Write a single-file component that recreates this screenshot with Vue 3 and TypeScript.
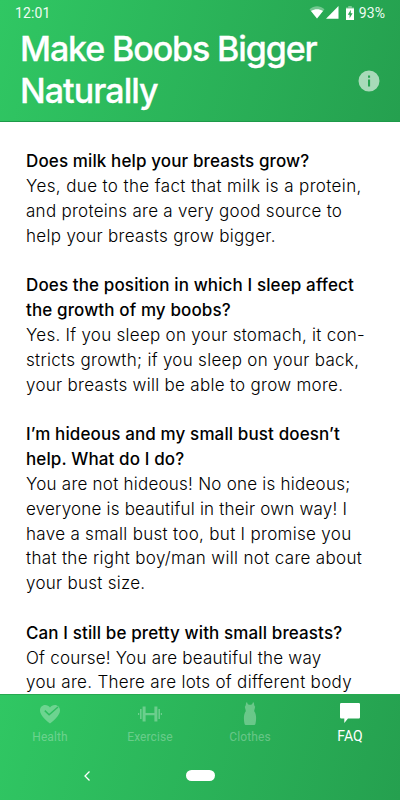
<script setup lang="ts">
interface AnswerLine {
  text: string
  /** letter spacing in px */
  tracking: number
}

interface Faq {
  question: string[]
  answer: AnswerLine[]
}

const title: string[] = ['Make Boobs Bigger', 'Naturally']

const faqs: Faq[] = [
  {
    question: ['Does milk help your breasts grow?'],
    answer: [
      { text: 'Yes, due to the fact that milk is a protein,', tracking: 0.38 },
      { text: 'and proteins are a very good source to', tracking: 0.28 },
      { text: 'help your breasts grow bigger.', tracking: 0.31 },
    ],
  },
  {
    question: ['Does the position in which I sleep affect', 'the growth of my boobs?'],
    answer: [
      { text: 'Yes. If you sleep on your stomach, it con-', tracking: 0.265 },
      { text: 'stricts growth; if you sleep on your back,', tracking: 0.3 },
      { text: 'your breasts will be able to grow more.', tracking: 0.29 },
    ],
  },
  {
    question: ['I’m hideous and my small bust doesn’t', 'help. What do I do?'],
    answer: [
      { text: 'You are not hideous! No one is hideous;', tracking: 0.24 },
      { text: 'everyone is beautiful in their own way! I', tracking: 0.2 },
      { text: 'have a small bust too, but I promise you', tracking: 0.31 },
      { text: 'that the right boy/man will not care about', tracking: 0.33 },
      { text: 'your bust size.', tracking: 0.27 },
    ],
  },
  {
    question: ['Can I still be pretty with small breasts?'],
    answer: [
      { text: 'Of course! You are beautiful the way', tracking: 0.22 },
      { text: 'you are. There are lots of different body', tracking: 0.31 },
    ],
  },
]
</script>

<template>
  <div class="screen">
    <header class="header">
      <div class="status">
        <span class="clock">12:01</span>
        <div class="indicators">
          <svg class="wifi" width="16" height="13" viewBox="0 0 16 13">
            <path d="M.5 3.200C5-.7 11-.7 15.500 3.200L8 12.500z" fill="#fff" fill-opacity=".35" />
            <path d="M2 5C6 2.600 10 2.600 14 5L8 12.500z" fill="#fff" />
          </svg>
          <svg class="signal" width="13" height="13" viewBox="0 0 13 13">
            <path d="M12.500 0v12.800H0z" fill="#fff" />
          </svg>
          <svg class="battery" width="8" height="14" viewBox="0 0 8 14">
            <path d="M2.200 0h3.600v1.500H8v2H0v-2h2.200z" fill="#fff" fill-opacity=".4" />
            <path d="M0 2.500h8V14H0zM4.800 3.800L1.800 8.700h1.800v3.600l3-5H4.800z" fill="#fff" fill-rule="evenodd" />
          </svg>
          <span class="percent">93%</span>
        </div>
      </div>
      <div class="title-row">
        <h1 class="title">
          <span v-for="line in title" :key="line" class="line">{{ line }}</span>
        </h1>
        <svg class="info" width="22" height="22" viewBox="0 0 22 22">
          <path
            fill-rule="evenodd"
            d="M11 .5a10.500 10.500 0 1 0 0 21a10.500 10.500 0 1 0 0-21zM10 5.600h2.100v2.100H10zM10 9.400h2.100v7H10z"
            fill="#fff"
            fill-opacity=".6"
          />
        </svg>
      </div>
    </header>

    <main class="content">
      <section v-for="faq in faqs" :key="faq.question[0]" class="faq">
        <h2 class="question">
          <span v-for="line in faq.question" :key="line" class="line">{{ line }}</span>
        </h2>
        <p class="answer">
          <span
            v-for="line in faq.answer"
            :key="line.text"
            class="line"
            :style="{ letterSpacing: line.tracking + 'px' }"
          >{{ line.text }}</span>
        </p>
      </section>
    </main>

    <footer class="footer">
      <nav class="tabs">
        <div class="tab">
          <svg class="icon" width="24" height="24" viewBox="0 0 24 24">
            <path
              d="M12 21.500C9 19.300 2 13.500 2 8.500C2 5.300 4.300 3 7.100 3C9.300 3 11 4 12 5.500C13 4 14.700 3 16.900 3C19.700 3 22 5.300 22 8.500C22 13.500 15 19.300 12 21.500z"
              fill="currentColor"
            />
            <path class="tick" d="M6.800 8.600l4.300 4.100l8.900-7.700" />
          </svg>
          <span>Health</span>
        </div>
        <div class="tab">
          <svg class="icon" width="24" height="24" viewBox="0 0 24 24">
            <path
              d="M0 11h1.200v2H0zM2 7h1.600v10H2zM4.600 4.500h3v15h-3zM7.600 10.900h8.800v2.300H7.600zM16.400 4.500h3v15h-3zM20.400 7H22v10h-1.600zM22.800 11H24v2h-1.200z"
              fill="currentColor"
            />
          </svg>
          <span>Exercise</span>
        </div>
        <div class="tab">
          <svg class="icon" width="24" height="24" viewBox="0 0 24 24">
            <path
              d="M8 .5h1.200c.2 1.500 1.200 2.300 2.800 2.300s2.600-.8 2.800-2.300H16c0 2 .2 3.200 1.200 4.200c-.3 2-1 3.200-1 4.500c1.300 1.600 1.900 4 1.900 6.500c0 2.600-.3 4.700-.7 6.300q-.2 1-1.200 1H7.800q-1 0-1.200-1c-.4-1.600-.7-3.700-.7-6.300c0-2.500.6-4.900 1.900-6.500c0-1.300-.7-2.500-1-4.500C7.800 3.700 8 2.500 8 .5z"
              fill="currentColor"
            />
          </svg>
          <span>Clothes</span>
        </div>
        <div class="tab active">
          <svg class="icon" width="24" height="24" viewBox="0 0 24 24">
            <path d="M3.200 1h17.600q1.200 0 1.200 1.200v13.100q0 1.200-1.200 1.200H10L6.300 21v-4.500H3.200Q2 16.500 2 15.300V2.200Q2 1 3.200 1z" fill="currentColor" />
          </svg>
          <span>FAQ</span>
        </div>
      </nav>
      <div class="system-nav">
        <svg class="back" width="8" height="12" viewBox="0 0 8 12">
          <path d="M6.500 1.500L2 6l4.500 4.500" fill="none" stroke="#fff" stroke-width="1.300" />
        </svg>
        <span class="home"></span>
      </div>
    </footer>
  </div>
</template>

<style>
body {
  margin: 0;
}
</style>

<style scoped>
.screen {
  width: 400px;
  height: 800px;
  display: flex;
  flex-direction: column;
  overflow: hidden;
  background: #fff;
  font-family: Inter, "Liberation Sans", sans-serif;
}
.header {
  height: 122px;
  flex: none;
  box-sizing: border-box;
  border-bottom: 1px solid #1d9a49;
  background: linear-gradient(105deg, #30c763 0%, #25a04f 100%);
  color: #fff;
}
.status {
  height: 25px;
  padding: 0 15px;
  display: flex;
  align-items: center;
  justify-content: space-between;
  font: 400 14px/26px Roboto, sans-serif;
  letter-spacing: 0.1px;
  color: #effbf2;
}
.indicators {
  display: flex;
  align-items: center;
}
.signal {
  margin-left: 1px;
}
.battery {
  margin-left: 7px;
}
.percent {
  margin-left: 5px;
}
.title-row {
  display: flex;
  justify-content: space-between;
  padding: 3px 20px 0;
}
.title {
  margin: 0;
  font-size: 34px;
  font-weight: 500;
  line-height: 42px;
  letter-spacing: -1.120px;
  -webkit-text-stroke: 0.3px #fff;
}
.title .line + .line {
  letter-spacing: -0.950px;
}
.line {
  display: block;
  white-space: nowrap;
}
.info {
  margin-top: 42px;
}
.content {
  flex: 1;
  min-height: 0;
  overflow: hidden;
  padding: 27.100px 26px 0;
  color: #000;
}
.faq {
  margin-bottom: 24.830px;
}
.question,
.answer {
  margin: 0;
  font-size: 17px;
  line-height: 24.830px;
}
.question {
  font-weight: 500;
  letter-spacing: 0.120px;
}
.answer {
  font-weight: 300;
}
.footer {
  height: 106px;
  flex: none;
  box-sizing: border-box;
  border-top: 1px solid #27a950;
  background: linear-gradient(105deg, #30c763 0%, #25a04f 100%);
}
.tabs {
  height: 56px;
  display: flex;
}
.tab {
  flex: 1;
  display: flex;
  flex-direction: column;
  align-items: center;
  gap: 3px;
  padding-top: 7px;
  color: rgba(255, 255, 255, 0.3);
  font: 400 12px/16px Roboto, sans-serif;
  letter-spacing: 0.1px;
}
.tab.active {
  gap: 2px;
  color: #fff;
  font-size: 14px;
  letter-spacing: 0;
}
.tick {
  fill: none;
  stroke: #2dbd5e;
  stroke-width: 1.500px;
}
.system-nav {
  height: 49px;
  display: grid;
  grid-template-columns: 173px 54px 1fr;
  align-items: center;
  justify-items: center;
}
.home {
  width: 29px;
  height: 11px;
  border-radius: 6px;
  background: #fff;
}
</style>
